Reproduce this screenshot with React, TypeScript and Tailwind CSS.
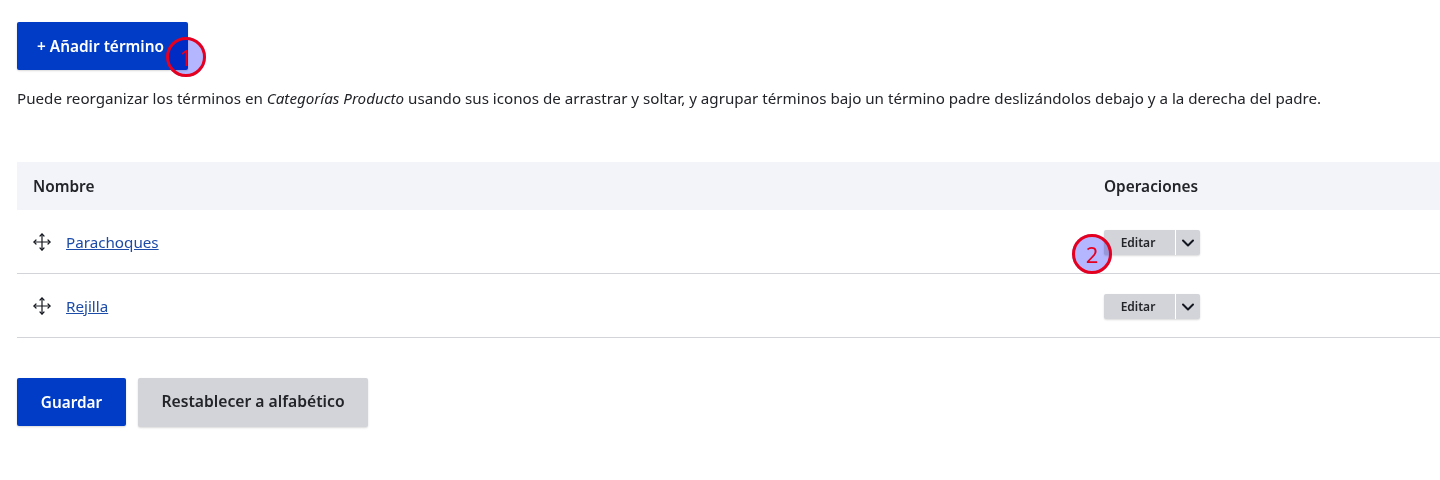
import React from "react";

const font = { fontFamily: '"Noto Sans", sans-serif' };

function DragIcon() {
  return (
    <svg width="18" height="18" viewBox="0 0 18 18" fill="none" stroke="#14171f" strokeWidth="1.2" strokeLinecap="round" strokeLinejoin="round">
      <path d="M9 1v16M1 9h16" />
      <path d="M7 3 9 1l2 2M7 15l2 2 2-2M3 7 1 9l2 2M15 7l2 2-2 2" />
    </svg>
  );
}

function Operations() {
  return (
    <div className="flex h-[25px] w-[96px] rounded-[2px] bg-[#d3d4d9] shadow-[0_1px_2px_rgba(0,0,0,0.15)]">
      <span className="flex w-[71px] items-center justify-center pr-[3px] text-[12px] font-semibold text-[#232429]">Editar</span>
      <span className="flex flex-1 items-center justify-center border-l border-white">
        <svg width="14" height="14" viewBox="0 0 14 14" fill="none" stroke="#14171f" strokeWidth="2" strokeLinecap="round" strokeLinejoin="round">
          <path d="M2 4.5 7 9.5l5-5" />
        </svg>
      </span>
    </div>
  );
}

function Row({ name }: { name: string }) {
  return (
    <div className="flex h-[64px] items-center border-b border-[#d3d4d9] pt-[2px]">
      <div className="flex flex-1 items-center pl-[16px]">
        <DragIcon />
        <a href="#" className="ml-[15px] text-[15.2px] text-[#1c4ba8] underline">{name}</a>
      </div>
      <div className="w-[336px]">
        <Operations />
      </div>
    </div>
  );
}

function Marker({ n, className }: { n: number; className: string }) {
  return (
    <div className={"absolute h-[40px] w-[40px] " + className}>
      <div className="absolute inset-0 rounded-full bg-[#b4b6ff] mix-blend-multiply" />
      <div className="absolute inset-0 flex items-center justify-center rounded-full border-[3px] border-[#e6001f] text-[22px] text-[#e6001f]">
        {n}
      </div>
    </div>
  );
}

export default function App() {
  return (
    <div className="relative h-[480px] w-[1440px] overflow-hidden bg-white pl-[17px] pt-[22px] text-[#232429]" style={font}>
      <button className="flex h-[48px] w-[171px] items-center justify-center rounded-[2px] bg-[#003cc5] pr-[4px] pt-[2px] text-[15.4px] font-semibold text-white shadow-[0_1px_2px_rgba(0,0,0,0.15)]">
        + Añadir término
      </button>

      <p className="mt-[16px] text-[15.17px] leading-[24px] whitespace-nowrap">
        Puede reorganizar los términos en <em>Categorías Producto</em> usando sus iconos de arrastrar y soltar, y agrupar términos bajo un término padre deslizándolos debajo y a la derecha del padre.
      </p>

      <div className="mt-[52px]">
        <div className="flex h-[48px] items-center bg-[#f2f4f9] pt-[2px] text-[15.4px] font-semibold">
          <div className="flex-1 pl-[16px]">Nombre</div>
          <div className="w-[336px]">Operaciones</div>
        </div>
        <Row name="Parachoques" />
        <Row name="Rejilla" />
      </div>

      <div className="mt-[40px] flex gap-[12px] font-semibold">
        <button className="h-[48px] w-[109px] rounded-[2px] bg-[#003cc5] text-[15.3px] text-white shadow-[0_1px_2px_rgba(0,0,0,0.15)]">Guardar</button>
        <button className="h-[49px] w-[230px] rounded-[2px] bg-[#d3d4d9] pb-[2px] text-[15.7px] shadow-[0_1px_2px_rgba(0,0,0,0.15)]">Restablecer a alfabético</button>
      </div>

      <Marker n={1} className="left-[166px] top-[37px]" />
      <Marker n={2} className="left-[1072px] top-[234px]" />
    </div>
  );
}
